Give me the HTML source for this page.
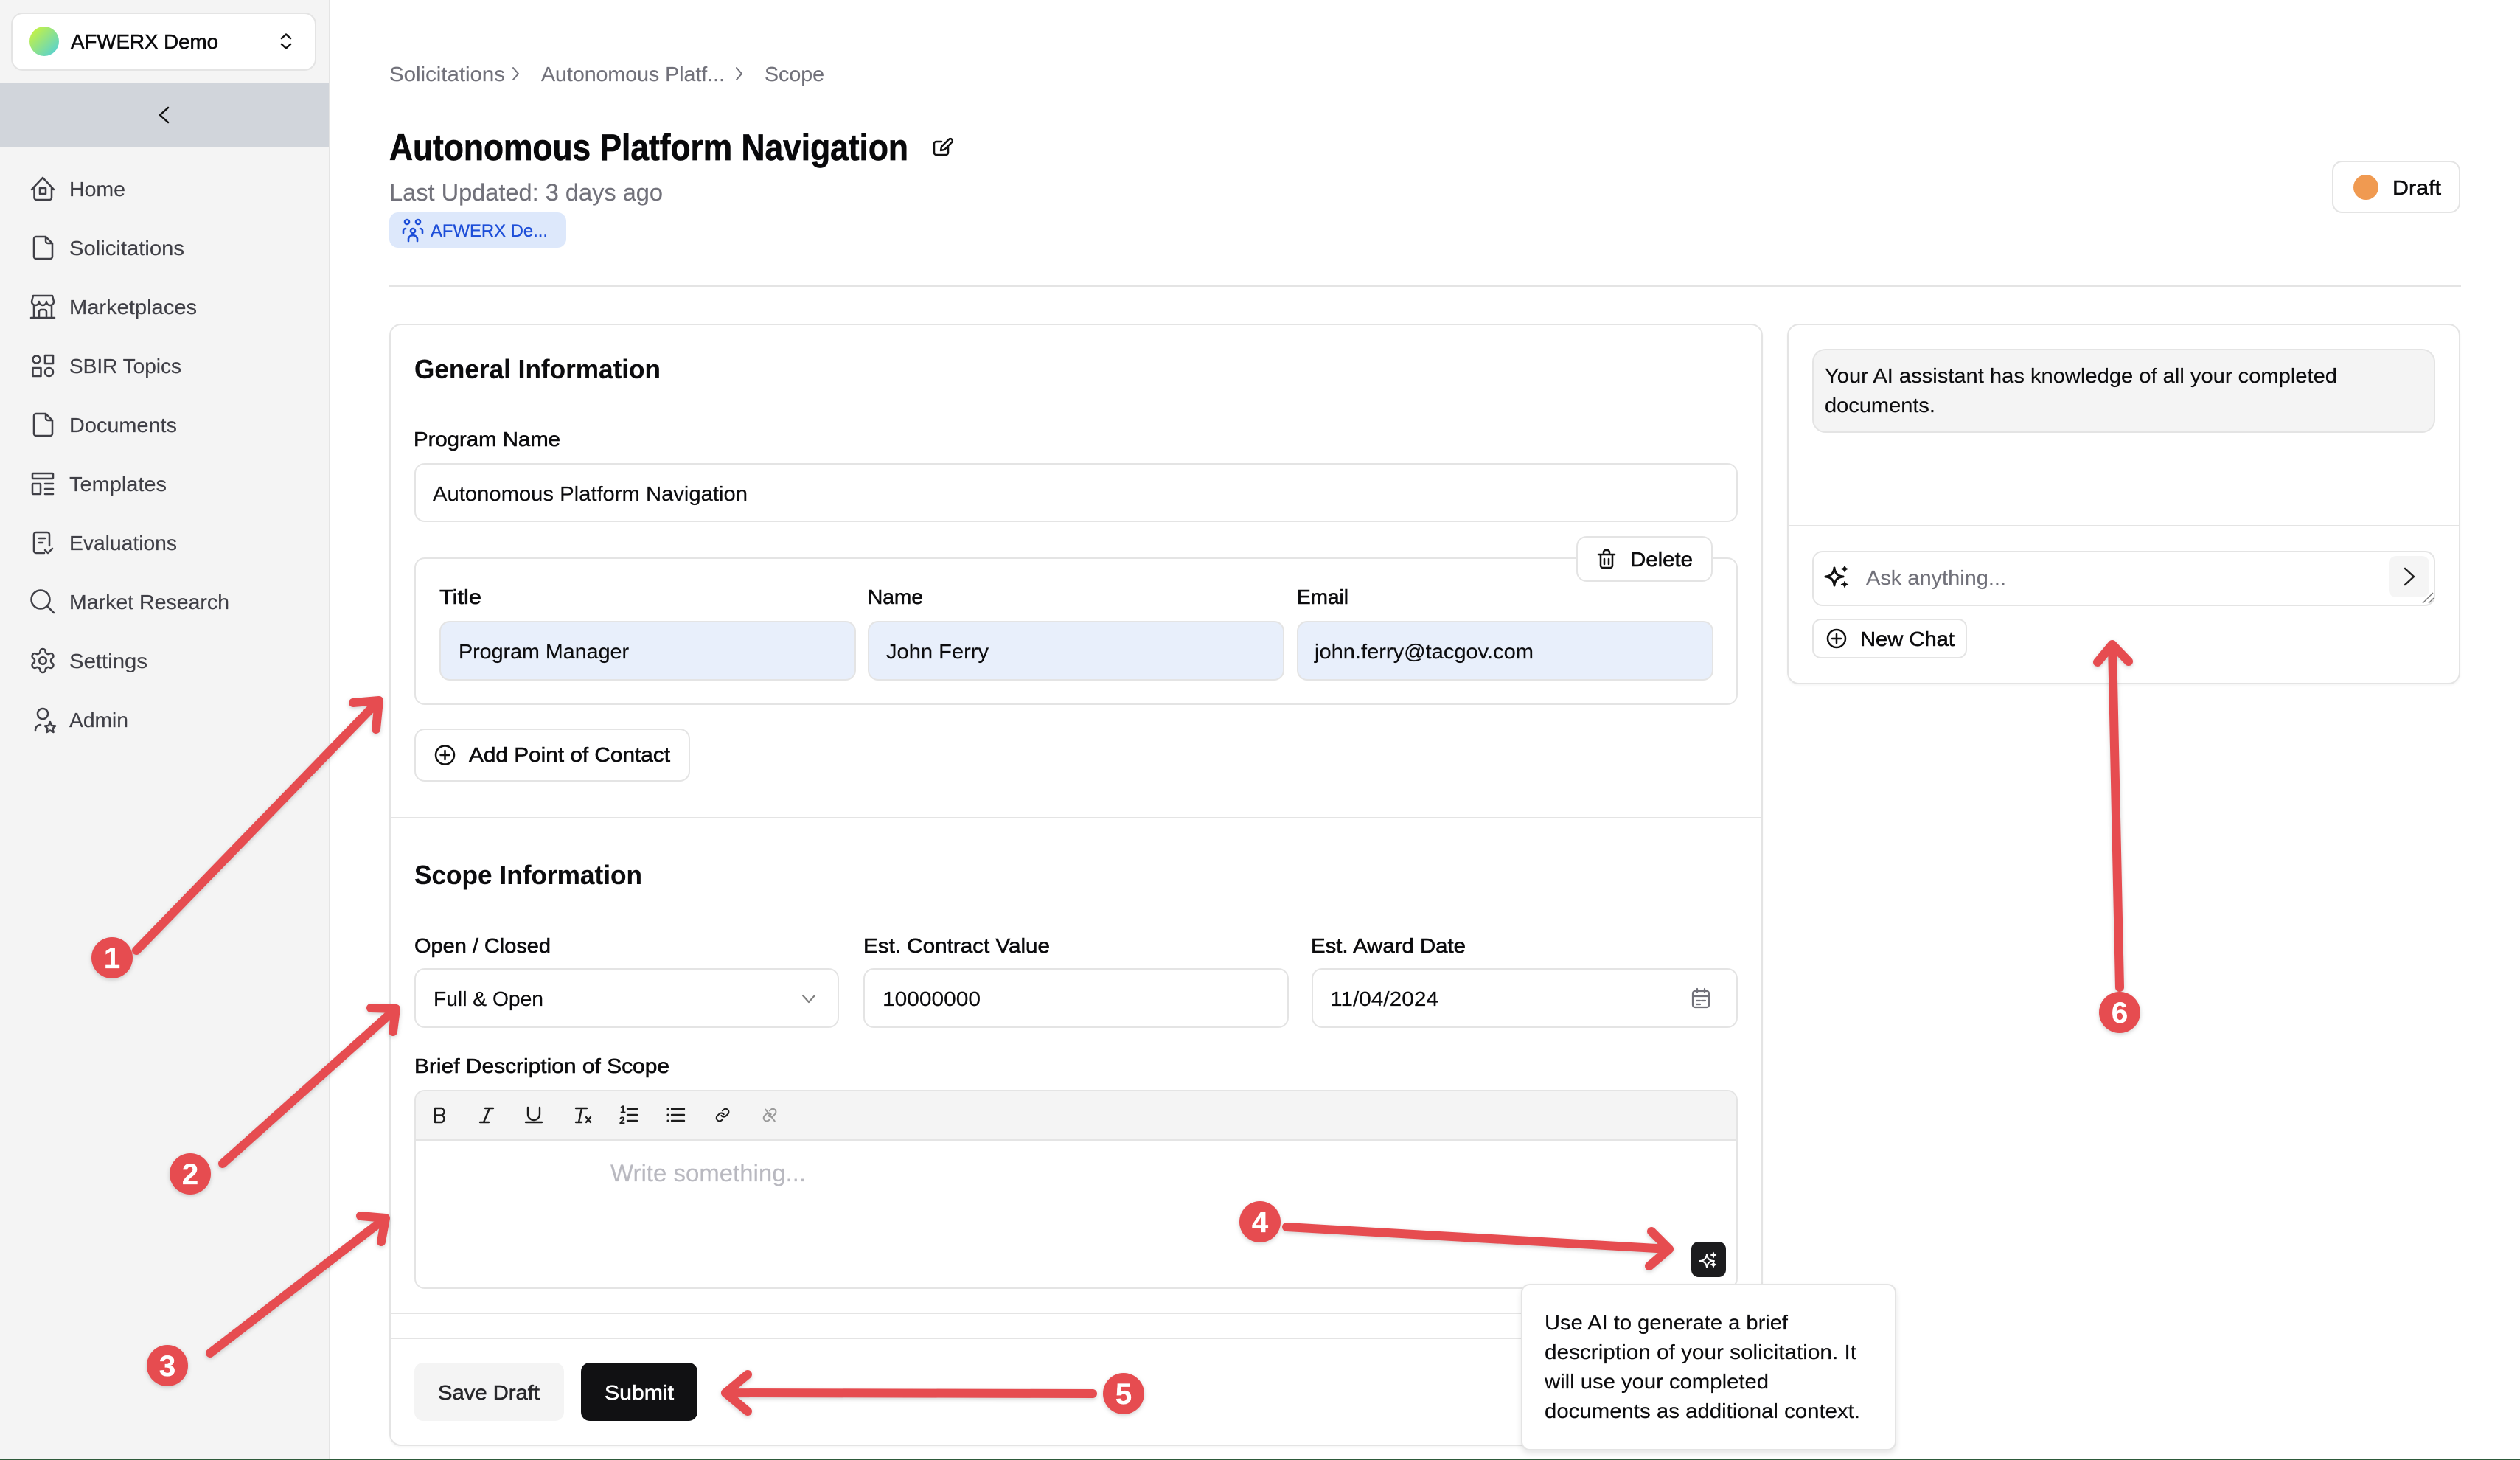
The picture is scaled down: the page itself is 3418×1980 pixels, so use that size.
<!DOCTYPE html>
<html lang="en">
<head>
<meta charset="utf-8">
<title>Autonomous Platform Navigation</title>
<style>
*{box-sizing:border-box;margin:0;padding:0}
html,body{width:3418px;height:1980px;overflow:hidden;background:#fff;font-family:"Liberation Sans",sans-serif}
.a{position:absolute}
.b{position:absolute;border:2px solid #e4e4e4;background:#fff;border-radius:14px}
.l{position:absolute;background:#e4e4e4;height:2px}
.f{background:#e8effb}
.s{box-shadow:0 2px 3px rgba(0,0,0,.04)}
svg{position:absolute;left:0;top:0}
text{font-family:"Liberation Sans",sans-serif;font-size:28px;fill:#0c0c0e;stroke:#0c0c0e;stroke-width:.15}
.m{stroke:#0c0c0e;stroke-width:.55}
.n{fill:#3f3f46;stroke:#3f3f46}
.g{fill:#71717a;stroke:#71717a}
.h{font-weight:700;font-size:36px;fill:#0c0c0e;stroke-width:.1}
.i{fill:none;stroke:#3f3f46;stroke-width:2.5;stroke-linecap:round;stroke-linejoin:round}
.k{fill:none;stroke:#111;stroke-width:2.5;stroke-linecap:round;stroke-linejoin:round}
.r{fill:none;stroke:#e64c50;stroke-width:12;stroke-linecap:round;stroke-linejoin:round}
.d{font-size:40px;font-weight:700;fill:#fff;stroke:#fff;stroke-width:.3;text-anchor:middle}
</style>
</head>
<body>
<!-- sidebar -->
<div class="a" style="left:0;top:0;width:448px;height:1980px;background:#f4f4f4;border-right:2px solid #e4e4e4"></div>
<div class="b" style="left:15px;top:17px;width:414px;height:79px;border-radius:16px"></div>
<div class="a" style="left:0;top:112px;width:446px;height:88px;background:#d1d5db"></div>

<!-- header -->
<div class="a" style="left:528px;top:288px;width:240px;height:48px;background:#dde8fb;border-radius:12px"></div>
<div class="l" style="left:528px;top:387px;width:2810px"></div>
<div class="b" style="left:3163px;top:218px;width:174px;height:71px"></div>

<!-- left card -->
<div class="b s" style="left:528px;top:439px;width:1863px;height:1522px;border-radius:16px"></div>
<div class="b" style="left:562px;top:628px;width:1795px;height:80px"></div>
<div class="b" style="left:562px;top:756px;width:1795px;height:200px"></div>
<div class="b" style="left:2138px;top:727px;width:185px;height:62px"></div>
<div class="b f" style="left:596px;top:842px;width:565px;height:81px"></div>
<div class="b f" style="left:1177px;top:842px;width:565px;height:81px"></div>
<div class="b f" style="left:1759px;top:842px;width:565px;height:81px"></div>
<div class="b" style="left:562px;top:988px;width:374px;height:72px"></div>
<div class="l" style="left:530px;top:1108px;width:1860px"></div>

<div class="b" style="left:562px;top:1313px;width:576px;height:81px"></div>
<div class="b" style="left:1171px;top:1313px;width:577px;height:81px"></div>
<div class="b" style="left:1779px;top:1313px;width:578px;height:81px"></div>

<div class="b" style="left:562px;top:1478px;width:1795px;height:270px;overflow:hidden">
  <div style="height:67px;background:#f4f4f4;border-bottom:2px solid #e4e4e4"></div>
</div>
<div class="l" style="left:530px;top:1780px;width:1860px"></div>
<div class="l" style="left:530px;top:1814px;width:1860px"></div>
<div class="a" style="left:562px;top:1848px;width:203px;height:79px;background:#f4f4f4;border-radius:12px"></div>
<div class="a" style="left:788px;top:1848px;width:158px;height:79px;background:#111113;border-radius:12px"></div>
<div class="a" style="left:2294px;top:1684px;width:47px;height:48px;background:#1c1c1e;border-radius:10px"></div>

<!-- tooltip -->
<div class="b" style="left:2063px;top:1741px;width:509px;height:226px;border-radius:12px;box-shadow:0 4px 8px rgba(0,0,0,.1)"></div>

<!-- right card -->
<div class="b s" style="left:2424px;top:439px;width:913px;height:489px;border-radius:16px"></div>
<div class="b" style="left:2458px;top:473px;width:845px;height:114px;background:#f4f4f4;border-radius:18px"></div>
<div class="l" style="left:2426px;top:712px;width:909px"></div>
<div class="b" style="left:2458px;top:747px;width:845px;height:75px"></div>
<div class="a" style="left:3240px;top:754px;width:55px;height:56px;background:#f5f5f5;border-radius:10px"></div>
<div class="b" style="left:2458px;top:839px;width:210px;height:54px;border-radius:12px"></div>

<!-- bottom edge -->
<div class="a" style="left:0;top:1978px;width:3418px;height:2px;background:#2d5a3a"></div>

<svg width="3418" height="1980" viewBox="0 0 3418 1980" xmlns="http://www.w3.org/2000/svg">
<defs>
<linearGradient id="og" x1="0" y1="0" x2="1" y2="1"><stop offset=".1" stop-color="#c6f243"/><stop offset=".9" stop-color="#58d2d0"/></linearGradient>
</defs>

<!-- sidebar top -->
<circle cx="60" cy="56" r="20" fill="url(#og)"/>
<text class="m" x="96" y="66" textLength="200" lengthAdjust="spacingAndGlyphs">AFWERX Demo</text>
<path class="k" d="M382 52L388 46.5L394 52M382 60L388 65.5L394 60"/>
<path class="k" d="M228 146L217 156L228 166" stroke-width="3"/>

<!-- sidebar nav text -->
<text class="n" x="94" y="266" textLength="76" lengthAdjust="spacingAndGlyphs">Home</text>
<text class="n" x="94" y="346" textLength="156" lengthAdjust="spacingAndGlyphs">Solicitations</text>
<text class="n" x="94" y="426" textLength="173" lengthAdjust="spacingAndGlyphs">Marketplaces</text>
<text class="n" x="94" y="506" textLength="152" lengthAdjust="spacingAndGlyphs">SBIR Topics</text>
<text class="n" x="94" y="586" textLength="146" lengthAdjust="spacingAndGlyphs">Documents</text>
<text class="n" x="94" y="666" textLength="132" lengthAdjust="spacingAndGlyphs">Templates</text>
<text class="n" x="94" y="746" textLength="146" lengthAdjust="spacingAndGlyphs">Evaluations</text>
<text class="n" x="94" y="826" textLength="217" lengthAdjust="spacingAndGlyphs">Market Research</text>
<text class="n" x="94" y="906" textLength="106" lengthAdjust="spacingAndGlyphs">Settings</text>
<text class="n" x="94" y="986" textLength="80" lengthAdjust="spacingAndGlyphs">Admin</text>

<!-- sidebar icons -->
<path class="i" d="M43 257L58 241L73 257M46.5 254V268a3 3 0 0 0 3 3H67a3 3 0 0 0 3-3V254"/>
<rect class="i" x="54" y="255" width="8" height="8"/>
<path class="i" d="M49 321H62L71 330V348a3 3 0 0 1-3 3H49a3 3 0 0 1-3-3V324a3 3 0 0 1 3-3ZM62 321V327a3 3 0 0 0 3 3H71"/>
<path class="i" d="M43 409L45 401H71L73 409a5 5 0 0 1-10 0a5 5 0 0 1-10 0a5 5 0 0 1-10 0ZM46 414V431M70 414V431M42 431H74M53 431V423a3 3 0 0 1 3-3H60a3 3 0 0 1 3 3V431"/>
<circle class="i" cx="49.5" cy="487.5" r="5"/><rect class="i" x="61" y="482" width="11" height="11"/>
<rect class="i" x="44.500" y="499" width="11" height="11"/><circle class="i" cx="66.500" cy="504.500" r="5.500"/>
<path class="i" d="M49 561H62L71 570V588a3 3 0 0 1-3 3H49a3 3 0 0 1-3-3V564a3 3 0 0 1 3-3ZM62 561V567a3 3 0 0 0 3 3H71"/>
<rect class="i" x="44" y="642" width="28" height="7" rx="1"/><rect class="i" x="44" y="656" width="11" height="14" rx="1"/>
<path class="i" d="M61 656H72M61 663H72M61 670H72"/>
<path class="i" d="M60 750H49a3 3 0 0 1-3-3V725a3 3 0 0 1 3-3H64a3 3 0 0 1 3 3V740M53 730H61M53 736H58M61 746L65 750L71 744"/>
<circle class="i" cx="55" cy="813" r="12.500"/><path class="i" d="M64.500 822.500L73 831"/>
<g transform="translate(38.800 876.800) scale(1.6)"><path class="i" style="stroke-width:1.56" d="M12.220 2h-.44a2 2 0 0 0-2 2v.18a2 2 0 0 1-1 1.730l-.43.25a2 2 0 0 1-2 0l-.15-.08a2 2 0 0 0-2.730.73l-.22.38a2 2 0 0 0 .73 2.730l.15.1a2 2 0 0 1 1 1.720v.51a2 2 0 0 1-1 1.740l-.15.09a2 2 0 0 0-.73 2.730l.22.38a2 2 0 0 0 2.730.73l.15-.08a2 2 0 0 1 2 0l.43.25a2 2 0 0 1 1 1.730V20a2 2 0 0 0 2 2h.44a2 2 0 0 0 2-2v-.18a2 2 0 0 1 1-1.730l.43-.25a2 2 0 0 1 2 0l.15.08a2 2 0 0 0 2.730-.73l.22-.39a2 2 0 0 0-.73-2.730l-.15-.08a2 2 0 0 1-1-1.740v-.5a2 2 0 0 1 1-1.740l.15-.09a2 2 0 0 0 .73-2.730l-.22-.38a2 2 0 0 0-2.730-.73l-.15.08a2 2 0 0 1-2 0l-.43-.25a2 2 0 0 1-1-1.730V4a2 2 0 0 0-2-2z"/><circle class="i" style="stroke-width:1.56" cx="12" cy="12" r="3"/></g>
<circle class="i" cx="58" cy="968" r="7"/>
<path class="i" d="M48 991V990a7 7 0 0 1 7-7"/>
<path class="i" d="M68 979L70 984L75 984.500L71.500 988L72.500 993L68 990.500L63.500 993L64.500 988L61 984.500L66 984Z" />

<!-- breadcrumbs -->
<text class="g" x="528" y="110" textLength="157" lengthAdjust="spacingAndGlyphs">Solicitations</text>
<path class="k" style="stroke:#71717a;stroke-width:2" d="M696 92L703 100L696 108"/>
<text class="g" x="734" y="110" textLength="249" lengthAdjust="spacingAndGlyphs">Autonomous Platf...</text>
<path class="k" style="stroke:#71717a;stroke-width:2" d="M999 92L1006 100L999 108"/>
<text class="g" x="1037" y="110" textLength="81" lengthAdjust="spacingAndGlyphs">Scope</text>

<!-- header -->
<text x="528" y="217" textLength="704" lengthAdjust="spacingAndGlyphs" style="font-size:50px;font-weight:700;fill:#09090b;stroke:#09090b;stroke-width:.7">Autonomous Platform Navigation</text>
<path class="k" d="M1277 192H1270a3 3 0 0 0-3 3V207a3 3 0 0 0 3 3H1283a3 3 0 0 0 3-3V200M1276 204l1-5L1287 189a2.500 2.500 0 0 1 4 4L1281 203Z"/>
<text class="g" x="528" y="272" textLength="371" lengthAdjust="spacingAndGlyphs" style="font-size:32px">Last Updated: 3 days ago</text>
<g fill="none" stroke="#1d4ed8" stroke-width="2.600" stroke-linecap="round">
<circle cx="552" cy="301" r="3"/><circle cx="567" cy="301" r="3"/><circle cx="560" cy="313" r="3"/>
<path d="M547 316V313a3 3 0 0 1 3-3M573 316V313a3 3 0 0 0-3-3M554 327V324a5 4 0 0 1 12 0V327"/>
</g>
<text x="584" y="321" textLength="159" lengthAdjust="spacingAndGlyphs" style="font-size:24px;fill:#1d4ed8;stroke:#1d4ed8;stroke-width:.3">AFWERX De...</text>
<circle cx="3209" cy="254" r="17" fill="#f09a51"/>
<text class="m" x="3245" y="264" textLength="66" lengthAdjust="spacingAndGlyphs">Draft</text>

<!-- general info -->
<text class="h" x="562" y="513" textLength="334" lengthAdjust="spacingAndGlyphs">General Information</text>
<text class="m" x="561" y="605" textLength="199" lengthAdjust="spacingAndGlyphs">Program Name</text>
<text x="587" y="679" textLength="427" lengthAdjust="spacingAndGlyphs">Autonomous Platform Navigation</text>
<path class="k" d="M2168 752H2190M2171 752V767a3 3 0 0 0 3 3H2184a3 3 0 0 0 3-3V752M2175 752V749a3 3 0 0 1 3-3H2180a3 3 0 0 1 3 3V752M2176 758V765M2182 758V765"/>
<text class="m" x="2211" y="768" textLength="85" lengthAdjust="spacingAndGlyphs">Delete</text>
<text class="m" x="596" y="819" textLength="57" lengthAdjust="spacingAndGlyphs">Title</text>
<text class="m" x="1177" y="819" textLength="75" lengthAdjust="spacingAndGlyphs">Name</text>
<text class="m" x="1759" y="819" textLength="70" lengthAdjust="spacingAndGlyphs">Email</text>
<text x="622" y="893" textLength="231" lengthAdjust="spacingAndGlyphs">Program Manager</text>
<text x="1202" y="893" textLength="139" lengthAdjust="spacingAndGlyphs">John Ferry</text>
<text x="1783" y="893" textLength="297" lengthAdjust="spacingAndGlyphs">john.ferry@tacgov.com</text>
<circle class="k" cx="603.500" cy="1024" r="12.500"/><path class="k" d="M603.500 1018V1030M597.500 1024H609.500"/>
<text class="m" x="636" y="1033" textLength="273" lengthAdjust="spacingAndGlyphs">Add Point of Contact</text>

<!-- scope -->
<text class="h" x="562" y="1199" textLength="309" lengthAdjust="spacingAndGlyphs">Scope Information</text>
<text class="m" x="562" y="1292" textLength="185" lengthAdjust="spacingAndGlyphs">Open / Closed</text>
<text class="m" x="1171" y="1292" textLength="253" lengthAdjust="spacingAndGlyphs">Est. Contract Value</text>
<text class="m" x="1778" y="1292" textLength="210" lengthAdjust="spacingAndGlyphs">Est. Award Date</text>
<text x="588" y="1364" textLength="149" lengthAdjust="spacingAndGlyphs">Full &amp; Open</text>
<path class="k" style="stroke:#808080;stroke-width:2.2" d="M1089 1350L1097 1359L1105 1350"/>
<text x="1197" y="1364" textLength="133" lengthAdjust="spacingAndGlyphs">10000000</text>
<text x="1804" y="1364" textLength="147" lengthAdjust="spacingAndGlyphs">11/04/2024</text>
<rect class="i" style="stroke:#71717a;stroke-width:2.2" x="2296" y="1344" width="22" height="22" rx="3"/>
<path class="i" style="stroke:#71717a;stroke-width:2.2" d="M2296 1351H2318M2302 1341V1346M2312 1341V1346M2301 1357H2306M2308 1357H2313M2301 1362H2306"/>
<text class="m" x="562" y="1455" textLength="346" lengthAdjust="spacingAndGlyphs">Brief Description of Scope</text>

<!-- toolbar -->
<g class="k" style="stroke:#1c1c1c;stroke-width:2.400;fill:none">
<path d="M590 1503H599a5 5 0 0 1 0 9.500H590M599 1512.500a5 5 0 0 1 0 9.500H590V1503"/>
<path d="M658 1503H669M651 1522H663M664 1503L656 1522"/>
<path d="M716 1502V1511a8 8 0 0 0 16 0V1502M713 1522H735"/>
<path d="M781 1503H796M789 1503L785 1522M781 1522H789M795 1515L801 1522M801 1515L795 1522"/>
<path d="M851 1504H864M851 1512H864M851 1520H864"/>
<path d="M911 1504H928M911 1512H928M911 1520H928"/>
<path stroke-width="3" d="M906 1504V1504.100M906 1512V1512.100M906 1520V1520.100"/>
<g transform="translate(970 1502) scale(.84)" style="stroke-width:2.400"><path d="M10 13a5 5 0 0 0 7.540.54l3-3a5 5 0 0 0-7.070-7.070l-1.720 1.710"/><path d="M14 11a5 5 0 0 0-7.540-.54l-3 3a5 5 0 0 0 7.070 7.070l1.710-1.710"/></g>
</g>
<text x="841" y="1509" style="font-size:14px;font-weight:700;fill:#1c1c1c">1</text>
<text x="840" y="1524" style="font-size:14px;font-weight:700;fill:#1c1c1c">2</text>
<g transform="translate(1034 1502) scale(.84)" fill="none" stroke="#9a9a9a" stroke-width="2.400" stroke-linecap="round"><path d="M10 13a5 5 0 0 0 7.540.54l3-3a5 5 0 0 0-7.070-7.070l-1.720 1.710"/><path d="M14 11a5 5 0 0 0-7.540-.54l-3 3a5 5 0 0 0 7.070 7.070l1.710-1.710"/><path d="M5 3L20 22"/></g>
<text x="828" y="1602" textLength="265" lengthAdjust="spacingAndGlyphs" style="font-size:32px;fill:#b9b9c0;stroke:#b9b9c0">Write something...</text>

<!-- AI button sparkle -->
<path d="M2315 1701Q2316 1710 2325 1710Q2316 1710 2315 1719Q2314 1710 2305 1710Q2314 1710 2315 1701Z" fill="none" stroke="#fff" stroke-width="2" stroke-linejoin="round"/>
<path d="M2324 1698Q2324.500 1701.500 2328 1702Q2324.500 1702.500 2324 1706Q2323.500 1702.500 2320 1702Q2323.500 1701.500 2324 1698ZM2324 1711Q2324.500 1714.500 2328 1715Q2324.500 1715.500 2324 1719Q2323.500 1715.500 2320 1715Q2323.500 1714.500 2324 1711Z" fill="#fff" stroke="#fff"/>

<!-- footer -->
<text class="m" x="594" y="1898" textLength="138" lengthAdjust="spacingAndGlyphs" style="fill:#27272a;stroke:#27272a">Save Draft</text>
<text x="820" y="1898" textLength="94" lengthAdjust="spacingAndGlyphs" style="fill:#fff;stroke:#fff;stroke-width:.55">Submit</text>

<!-- tooltip text -->
<text x="2095" y="1803" textLength="330" lengthAdjust="spacingAndGlyphs">Use AI to generate a brief</text>
<text x="2095" y="1843" textLength="423" lengthAdjust="spacingAndGlyphs">description of your solicitation. It</text>
<text x="2095" y="1883" textLength="304" lengthAdjust="spacingAndGlyphs">will use your completed</text>
<text x="2095" y="1923" textLength="428" lengthAdjust="spacingAndGlyphs">documents as additional context.</text>

<!-- right card -->
<text x="2475" y="519" textLength="695" lengthAdjust="spacingAndGlyphs">Your AI assistant has knowledge of all your completed</text>
<text x="2475" y="559" textLength="150" lengthAdjust="spacingAndGlyphs">documents.</text>
<path d="M2488 770Q2489 781 2500 782Q2489 783 2488 794Q2487 783 2476 782Q2487 781 2488 770Z" fill="none" stroke="#111" stroke-width="3" stroke-linejoin="round"/>
<path d="M2502 767Q2502.500 771 2507 771.500Q2502.500 772 2502 776Q2501.500 772 2497 771.500Q2501.500 771 2502 767ZM2502 788Q2502.500 792 2507 792.500Q2502.500 793 2502 797Q2501.500 793 2497 792.500Q2501.500 792 2502 788Z" fill="#111" stroke="#111"/>
<text class="g" x="2531" y="793" textLength="190" lengthAdjust="spacingAndGlyphs">Ask anything...</text>
<path class="k" style="stroke:#222" d="M3262 771L3274 782L3262 793"/>
<path d="M3286 818L3300 804M3294 818L3301 811" stroke="#777" stroke-width="1.300" fill="none"/>
<circle class="k" cx="2491" cy="866" r="12"/><path class="k" d="M2491 860V872M2485 866H2497"/>
<text class="m" x="2523" y="876" textLength="128" lengthAdjust="spacingAndGlyphs">New Chat</text>

<!-- annotations -->
<g style="filter:drop-shadow(0 2px 3px rgba(0,0,0,.18))">
<path class="r" d="M185 1289L514 950M479 953L514 950L510 989"/>
<circle cx="152" cy="1299" r="28" fill="#e64c50"/>
<path class="r" d="M302 1578L537 1368M503 1367L537 1368L533 1399"/>
<circle cx="258" cy="1592" r="28" fill="#e64c50"/>
<path class="r" d="M285 1835L523 1652M489 1649L523 1652L517 1684"/>
<circle cx="227" cy="1852" r="28" fill="#e64c50"/>
<path class="r" d="M1745 1664L2264 1694M2240 1670L2264 1694L2237 1717"/>
<circle cx="1709" cy="1657" r="28" fill="#e64c50"/>
<path class="r" d="M1482 1890L984 1889M1014 1864L984 1889L1014 1914"/>
<circle cx="1524" cy="1890" r="28" fill="#e64c50"/>
<path class="r" d="M2875 1339L2865 874M2845 898L2865 874L2887 897"/>
<circle cx="2875" cy="1373" r="28" fill="#e64c50"/>
</g>
<text class="d" x="152" y="1313">1</text>
<text class="d" x="258" y="1606">2</text>
<text class="d" x="227" y="1866">3</text>
<text class="d" x="1709" y="1671">4</text>
<text class="d" x="1524" y="1904">5</text>
<text class="d" x="2875" y="1387">6</text>
</svg>
</body>
</html>
